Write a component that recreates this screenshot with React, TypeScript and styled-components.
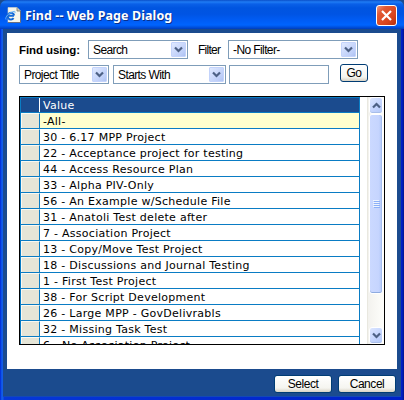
import React from 'react';
import styled, { createGlobalStyle } from 'styled-components';

const Global = createGlobalStyle`
  * { box-sizing: border-box; }
  body { margin: 0; background: #1b4b8e; overflow: hidden; }
`;

const Dialog = styled.div`
  width: 404px;
  height: 400px;
  display: flex;
  flex-direction: column;
  font-family: 'Liberation Sans', Arial, sans-serif;
  font-size: 12px;
  color: #000;
  background: #1b4b8e;
`;

const TitleBar = styled.header`
  height: 29px;
  flex: none;
  display: flex;
  align-items: center;
  padding: 1px 7px 0 5px;
  border-radius: 7px 7px 0 0;
  background: linear-gradient(#0a4fc8 0, #1f7cf5 2px, #0a60e8 4px, #0055e0 8px, #0054e3 14px, #005cf4 20px, #0064fe 25px, #0052e0 27px, #003dbb 29px);
`;

const Title = styled.h1`
  flex: 1;
  margin: 2px 0 0 4px;
  font: bold 12.5px/18px 'Noto Sans', sans-serif;
  letter-spacing: 0.09px;
  color: #fff;
  text-shadow: 1px 1px 0 #0a2f8a;
  white-space: nowrap;
`;

const CloseButton = styled.button`
  width: 21px;
  height: 21px;
  padding: 0;
  margin-top: 1px;
  border: 1px solid #fff;
  border-radius: 3px;
  background: linear-gradient(135deg, #f09a80 0, #e25a35 25%, #d8431c 70%, #b32f0c 100%);
  svg { display: block; margin: 3px; }
`;

const Frame = styled.div`
  flex: 1;
  min-height: 0;
  display: flex;
  flex-direction: column;
  padding: 4px 4px 0;
  border: solid #0831d9;
  border-width: 0 3px 3px;
  border-image: linear-gradient(90deg, #0019cf 0, #0a4fe8 1px, #1660e8 3px, #0638d8 4px, #0020c8 402px, #00138c 404px) 3;
  box-shadow: inset 0 -1px #1248b8;
`;

const Content = styled.main`
  height: 336px;
  flex: none;
  background: #fff;
  padding: 7px 12px 0 12px;
`;

const Row = styled.div<{ $bottom: number }>`
  display: flex;
  height: 19px;
  margin-bottom: ${p => p.$bottom}px;
`;

const FieldLabel = styled.label<{ $bold?: boolean; $width: number; $indent?: number }>`
  width: ${p => p.$width}px;
  padding-left: ${p => p.$indent ?? 0}px;
  font-weight: ${p => (p.$bold ? 'bold' : 'normal')};
  font-size: ${p => (p.$bold ? 11.5 : 12)}px;
  letter-spacing: ${p => (p.$bold ? -0.1 : -0.75)}px;
  line-height: 20px;
  white-space: nowrap;
`;

const SelectBox = styled.div<{ $width: number; $gap?: number }>`
  width: ${p => p.$width}px;
  height: 19px;
  flex: none;
  display: flex;
  justify-content: space-between;
  margin-right: ${p => p.$gap ?? 0}px;
  padding: 1px 1px 1px 4px;
  border: 1px solid #7f9db9;
  background: #fff;
  line-height: 16px;
  letter-spacing: -0.6px;
  white-space: nowrap;
`;

const DropArrow = styled.span`
  width: 15px;
  height: 15px;
  border: 1px solid #c3d3fb;
  border-radius: 1px;
  background: linear-gradient(135deg, #dfe9ff, #bccdf8 80%, #adc2f2);
  svg { display: block; margin: 3px 2px; }
`;

const TextInput = styled.input`
  width: 100px;
  height: 19px;
  padding: 1px 3px;
  border: 1px solid #7f9db9;
  background: #fff;
`;

const Button = styled.button<{ $width: number; $left?: number; $top?: number }>`
  width: ${p => p.$width}px;
  height: 18px;
  flex: none;
  margin: ${p => p.$top ?? 0}px 0 0 ${p => p.$left ?? 0}px;
  padding: 0;
  border: 1px solid #003c74;
  border-radius: 3px;
  background: linear-gradient(#fff, #f5f5f0 75%, #d8d2c4);
  font: 12px/15px 'Liberation Sans', Arial, sans-serif;
  letter-spacing: -0.45px;
  color: #000;
`;

const ListBox = styled.section`
  width: 366px;
  height: 249px;
  display: flex;
  justify-content: space-between;
  overflow: hidden;
  border: 1px solid #000;
`;

const Grid = styled.div`
  width: 340px;
  height: 272px;
  border: 1px solid #0a7cc4;
`;

const Item = styled.div<{ $kind?: 'header' | 'active' }>`
  display: flex;
  height: ${p => (p.$kind === 'header' ? 15 : 16)}px;
  border-bottom: 1px solid #0a7cc4;
  font: 11px/${p => (p.$kind === 'header' ? 15 : 17)}px 'DejaVu Sans', Verdana, sans-serif;
  letter-spacing: 0.27px;
  white-space: nowrap;
  color: ${p => (p.$kind === 'header' ? '#fff' : '#000')};
  background: ${p => (p.$kind === 'header' ? '#1b4b8e' : p.$kind === 'active' ? '#ffffce' : '#fff')};
`;

const Handle = styled.span<{ $header?: boolean }>`
  width: 19px;
  flex: none;
  border: solid ${p => (p.$header ? '#1b4b8e' : '#fafaf2')};
  border-width: ${p => (p.$header ? 0 : '1px 0 0 1px')};
  border-right: 1px solid ${p => (p.$header ? '#fff' : '#0a7cc4')};
  background: ${p => (p.$header ? '#1b4b8e' : '#e5e5d7')};
`;

const Cell = styled.span`
  padding-left: 3px;
`;

const ScrollBar = styled.div`
  width: 17px;
  height: 247px;
  display: flex;
  flex-direction: column;
  padding: 0 1px;
  border-left: 1px solid #e9e8e0;
  background: linear-gradient(90deg, #f3f2ee, #fefefb);
`;

const ScrollButton = styled.span`
  height: 17px;
  flex: none;
  border: 1px solid #fff;
  border-radius: 3px;
  background: linear-gradient(135deg, #dce6ff, #c2d3fd 60%, #b3c8f8);
  box-shadow: inset 0 -1px #a8bee9;
  svg { display: block; margin: 4px 2px; }
`;

const Thumb = styled.div`
  height: 180px;
  flex: none;
  display: flex;
  align-items: center;
  justify-content: center;
  border: 1px solid #fff;
  border-radius: 3px;
  background: linear-gradient(90deg, #cbd9ff, #c6d5fe 70%, #b4c9f8);
  box-shadow: inset 0 -1px #8eabe0, inset -1px 0 #a5bef0;
`;

const Track = styled.div`
  flex: 1;
`;

const Footer = styled.footer`
  height: 28px;
  display: flex;
  justify-content: flex-end;
  gap: 6px;
  padding: 6px 1px 0 0;
`;

const Chevron = ({ up }: { up?: boolean }) => (
  <svg width="9" height="7" viewBox="0 0 9 7">
    <path d={up ? 'M1 5.5 4.5 2 8 5.5' : 'M1 1.5 4.5 5 8 1.5'} fill="none" stroke="#4d6185" strokeWidth="2.2" />
  </svg>
);

const PageIcon = () => (
  <svg width="16" height="16" viewBox="0 0 16 16">
    <path d="M3 .5h9L15.5 4v11.5H3z" fill="#f7f6ec" stroke="#d8d6c8" strokeWidth=".6" />
    <path d="M12 .5V4h3.5" fill="#c9c7b4" stroke="#77776c" strokeWidth=".8" />
    <path d="M15.5 4v11.5H3" fill="none" stroke="#55586a" strokeWidth=".8" />
    <path d="M9 8.8H3.2M9.2 8.4a3.3 3.3 0 1 0-.6 2.8" fill="none" stroke="#1268d8" strokeWidth="2" />
    <path d="M1 12.5C-.3 10.5 4 5 9.3 4.4c1.1 0 1 .8.4 1.7" fill="none" stroke="#67b3f7" />
  </svg>
);

const Select = ({ label, width, gap }: { label: string; width: number; gap?: number }) => (
  <SelectBox $width={width} $gap={gap} role="combobox">
    {label}
    <DropArrow><Chevron /></DropArrow>
  </SelectBox>
);

const projects = [
  '30 - 6.17 MPP Project',
  '22 - Acceptance project for testing',
  '44 - Access Resource Plan',
  '33 - Alpha PIV-Only',
  '56 - An Example w/Schedule File',
  '31 - Anatoli Test delete after',
  '7 - Association Project',
  '13 - Copy/Move Test Project',
  '18 - Discussions and Journal Testing',
  '1 - First Test Project',
  '38 - For Script Development',
  '26 - Large MPP - GovDelivrabls',
  '32 - Missing Task Test',
  '6 - No Association Project',
];

export default function App() {
  return (
    <>
      <Global />
      <Dialog>
        <TitleBar>
          <PageIcon />
          <Title>Find -- Web Page Dialog</Title>
          <CloseButton aria-label="Close">
            <svg width="13" height="13" viewBox="0 0 13 13">
              <path d="m2 2 9 9M11 2l-9 9" stroke="#fff" strokeWidth="2.2" />
            </svg>
          </CloseButton>
        </TitleBar>
        <Frame>
          <Content>
            <Row $bottom={6}>
              <FieldLabel $bold $width={69}>Find using:</FieldLabel>
              <Select label="Search" width={100} />
              <FieldLabel $width={40} $indent={10}>Filter</FieldLabel>
              <Select label="-No Filter-" width={130} />
            </Row>
            <Row $bottom={12}>
              <Select label="Project Title" width={90} gap={4} />
              <Select label="Starts With" width={113} gap={3} />
              <TextInput />
              <Button $width={28} $left={11} $top={-1}>Go</Button>
            </Row>
            <ListBox>
              <Grid>
                <Item $kind="header"><Handle $header /><Cell>Value</Cell></Item>
                <Item $kind="active"><Handle /><Cell>-All-</Cell></Item>
                {projects.map(name => (
                  <Item key={name}><Handle /><Cell>{name}</Cell></Item>
                ))}
              </Grid>
              <ScrollBar>
                <ScrollButton><Chevron up /></ScrollButton>
                <Thumb>
                  <svg width="7" height="8" viewBox="0 0 7 8">
                    <path d="M0 .5h6m-6 2h6m-6 2h6m-6 2h6" stroke="#eef4fe" />
                    <path d="M1 1.5h6m-6 2h6m-6 2h6m-6 2h6" stroke="#8cb0f8" />
                  </svg>
                </Thumb>
                <Track />
                <ScrollButton><Chevron /></ScrollButton>
              </ScrollBar>
            </ListBox>
          </Content>
          <Footer>
            <Button $width={58}>Select</Button>
            <Button $width={58}>Cancel</Button>
          </Footer>
        </Frame>
      </Dialog>
    </>
  );
}
